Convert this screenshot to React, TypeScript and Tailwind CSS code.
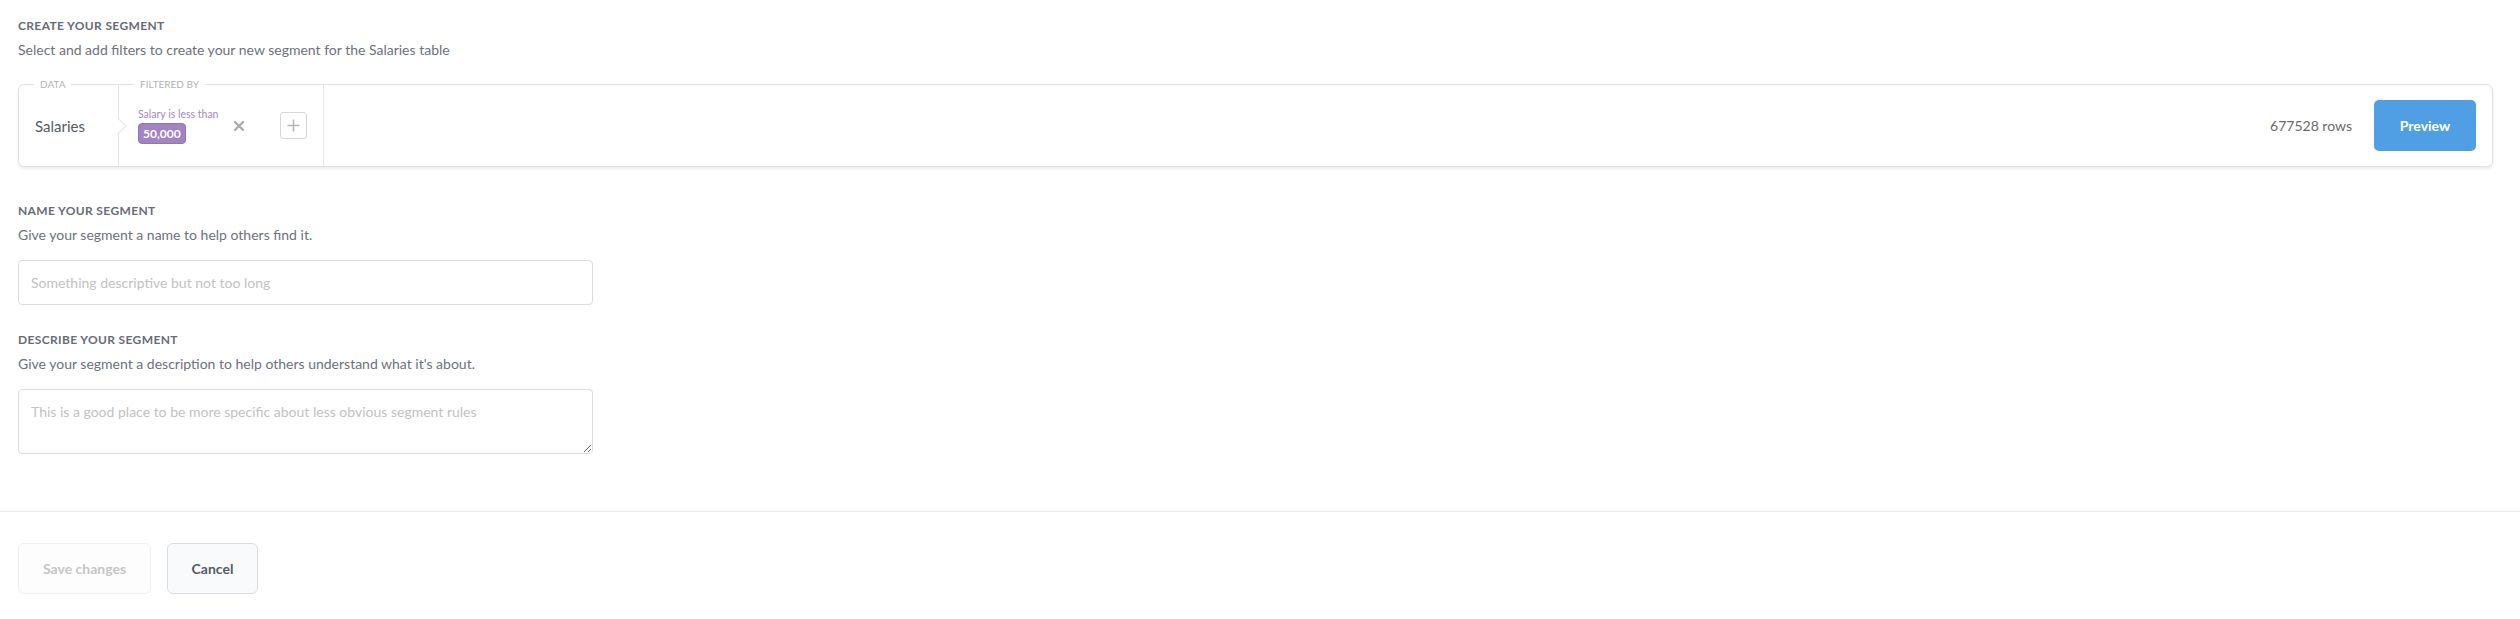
import React from "react";

function XIcon() {
  return (
    <svg width="12" height="12" viewBox="0 0 12 12" fill="none">
      <path d="M2 2L10 10M10 2L2 10" stroke="#a9a9a9" strokeWidth="2.2" strokeLinecap="round" />
    </svg>
  );
}

function PlusIcon() {
  return (
    <svg width="15" height="15" viewBox="0 0 15 15" fill="none">
      <path d="M7.5 1.5V13.5M1.5 7.5H13.5" stroke="#b5b5b5" strokeWidth="1.5" />
    </svg>
  );
}

export default function App() {
  return (
    <div className="min-h-[619px] bg-white font-['Lato','Noto_Sans',sans-serif]">
      <div className="pl-[18px] pr-[27px] pt-[18px]">
        <h2 className="text-[12px] leading-[16px] font-bold uppercase tracking-[0.03em] text-[#676c77]">
          Create your segment
        </h2>
        <p className="mt-[6px] text-[14px] leading-[20px] text-[#6c727d]">
          Select and add filters to create your new segment for the Salaries table
        </p>

        <div className="mt-[24px] flex h-[83px] rounded-[6px] border border-[#e1e1e1] bg-white shadow-[0_2px_3px_rgba(0,0,0,0.08)]">
          <div className="relative box-border flex w-[100px] shrink-0 items-center border-r border-[#e6e6e6] pl-[16px]">
            <span className="absolute -top-[7px] left-[15px] bg-white px-[6px] text-[10px] leading-[12px] text-[#b3b3b3]">
              DATA
            </span>
            <span className="text-[15px] leading-[20px] text-[#555b66]">Salaries</span>
            <div className="absolute right-[-6px] top-1/2 z-10 h-[12px] w-[12px] -translate-y-1/2 rotate-45 border-r border-t border-[#e6e6e6] bg-white" />
          </div>

          <div className="relative flex shrink-0 items-center border-r border-[#e6e6e6] pl-[19px] pr-[16px]">
            <span className="absolute -top-[7px] left-[15px] bg-white px-[6px] text-[10px] leading-[12px] text-[#b3b3b3]">
              FILTERED BY
            </span>
            <div className="flex flex-col items-start">
              <span className="text-[10.5px] leading-[14px] text-[#a487c4]">Salary is less than</span>
              <span className="mt-[2px] flex h-[21px] items-center rounded-[4px] border border-[#9173b6] bg-[#a283c4] px-[4px] text-[12px] font-bold text-white">
                50,000
              </span>
            </div>
            <div className="ml-[15px] flex items-center">
              <XIcon />
            </div>
            <div className="ml-[35px] flex h-[27px] w-[27px] items-center justify-center rounded-[3px] border border-[#d8d8d8]">
              <PlusIcon />
            </div>
          </div>

          <div className="flex flex-1 items-center justify-end pr-[16px]">
            <span className="mr-[22px] text-[14px] text-[#6a6a6a]">677528 rows</span>
            <button className="flex h-[51px] w-[102px] items-center justify-center rounded-[5px] bg-[#509ee3] text-[14px] font-bold text-white">
              Preview
            </button>
          </div>
        </div>

        <h2 className="mt-[36px] text-[12px] leading-[16px] font-bold uppercase tracking-[0.03em] text-[#676c77]">
          Name your segment
        </h2>
        <p className="mt-[6px] text-[14px] leading-[20px] text-[#6c727d]">
          Give your segment a name to help others find it.
        </p>
        <input
          className="mt-[15px] block h-[45px] w-[575px] rounded-[4px] border border-[#dcdcdc] px-[12px] text-[14px] text-[#4c5773] outline-none placeholder:text-[#c2c2c2]"
          placeholder="Something descriptive but not too long"
        />

        <h2 className="mt-[27px] text-[12px] leading-[16px] font-bold uppercase tracking-[0.03em] text-[#676c77]">
          Describe your segment
        </h2>
        <p className="mt-[6px] text-[14px] leading-[20px] text-[#6c727d]">
          Give your segment a description to help others understand what it's about.
        </p>
        <textarea
          className="mt-[15px] block h-[65px] w-[575px] rounded-[4px] border border-[#dcdcdc] px-[12px] pt-[12px] text-[14px] leading-[20px] text-[#4c5773] outline-none placeholder:text-[#c2c2c2]"
          placeholder="This is a good place to be more specific about less obvious segment rules"
        />
      </div>

      <div className="mt-[57px] flex gap-[16px] border-t border-[#ededed] px-[18px] pt-[31px]">
        <button className="flex h-[51px] w-[133px] items-center justify-center rounded-[6px] border border-[#efefef] bg-[#fdfdfd] text-[14px] font-bold text-[#c6c6c6]">
          Save changes
        </button>
        <button className="flex h-[51px] w-[91px] items-center justify-center rounded-[6px] border border-[#d9dde3] bg-[#f9fafb] text-[14px] font-bold text-[#555b66]">
          Cancel
        </button>
      </div>
    </div>
  );
}
